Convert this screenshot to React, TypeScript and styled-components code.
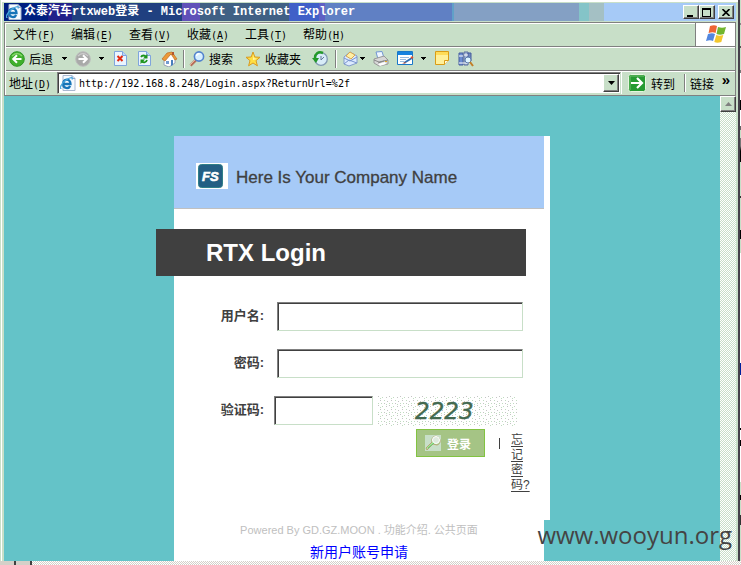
import React from "react";
import styled, { createGlobalStyle } from "styled-components";

const face = "#c8dfc8";
const teal = "#64c3c8";
const ui = '"Liberation Sans", "Noto Sans CJK SC", sans-serif';
const mono = '"Liberation Mono", "Noto Sans CJK SC", monospace';
const tallMono = '"DejaVu Sans Mono", "Noto Sans CJK SC", monospace';

const GlobalStyle = createGlobalStyle`
  * { box-sizing: border-box; }
  body { margin: 0; background: ${face}; font-family: ${ui}; font-size: 12px; color: #000; }
  button, input { font: inherit; color: inherit; margin: 0; padding: 0; border: 0; border-radius: 0; }
  button { background: none; cursor: pointer; }
  svg { display: block; flex: none; }
`;

const Desktop = styled.div`
  display: grid;
  grid-template-columns: 1fr 1px;
  grid-template-rows: 1fr 4px;
  min-height: 100vh;
`;
const Behind = styled.div`
  background: linear-gradient(#c8dfc8 0 23px, #888 23px 25px, #c8dfc8 25px 46px, #555 46px 48px, #c8dfc8 48px 70px,
    #777 70px 73px, #fff 73px 100px, #000 100px 110px, #fff 110px 126px, #666 126px 130px, #c8dfc8 130px 138px,
    #777 138px 146px, #000 151px 162px, #c8dfc8 162px 196px, #333 196px 198px, #c8dfc8 198px 230px, #000 230px 239px,
    #c8dfc8 239px 253px, #fff 253px 363px, #00209c 363px 375px, #fff 375px 428px, #000 428px 430px, #fff 430px 440px,
    #000 440px 446px, #fff 446px 482px, #c8dfc8 482px 495px, #000 495px 500px, #c8dfc8 500px 515px, #333 515px 525px, #c8dfc8 525px);
`;
const Window = styled.div`
  display: flex;
  flex-direction: column;
  min-width: 0;
  background: ${face};
  border-right: 2px solid #45404a;
  padding: 3px 2px 0 4px;
  box-shadow: inset 1px 0 ${face}, inset 2px 2px #fff;
`;
const TitleBar = styled.header`
  display: flex;
  align-items: center;
  height: 18px;
  gap: 2px;
  padding: 0 2px;
  color: #fff;
  background: linear-gradient(90deg, #002080 0 44px, #20208a 44px 68px, #204080 68px 178px, #6050b8 178px 196px,
    #406084 196px 285px, #4060c8 285px 315px, #6060c4 315px 321px, #6080c4 321px 448px, #60a0c8 448px 450px,
    #84a0c4 450px 575px, #84c4c8 575px 585px, #a4c0c4 585px 600px, #a6caf7 600px);
`;
const Title = styled.h1`
  flex: 1;
  margin: 0;
  font: bold 12px/18px ${mono};
  white-space: nowrap;
`;
const WindowButtons = styled.div`
  display: flex;
`;
const BevelButton = styled.button<{ $gap?: boolean }>`
  display: grid;
  place-items: center;
  flex: none;
  width: 16px;
  height: 14px;
  margin-left: ${(p) => (p.$gap ? "3px" : "0")};
  background: ${face};
  border: 1px solid;
  border-color: #fff #404040 #404040 #fff;
  box-shadow: inset -1px -1px #808080;
`;
const Bars = styled.div`
  margin-top: 1px;
  border: 1px solid #808080;
  box-shadow: inset 1px 1px #fff;
  padding-left: 1px;
`;
const Bar = styled.div`
  display: flex;
  align-items: center;
  height: 24px;
  border-bottom: 1px solid #808080;
  box-shadow: inset 0 1px #fff;
  &:last-child { border-bottom: 0; }
`;
const MenuItem = styled.button`
  width: 58px;
  padding-left: 7px;
  text-align: left;
  white-space: nowrap;
  line-height: 18px;
`;
const Key = styled.span`
  font: 10px ${tallMono};
  u { text-underline-offset: 2px; }
`;
const Flag = styled.div`
  display: grid;
  place-items: center;
  width: 40px;
  height: 23px;
  margin-left: auto;
  background: #fff;
  border-left: 1px solid #808080;
`;
const Tools = styled(Bar)`
  padding-left: 3px;
`;
const Tool = styled.button<{ $w: number }>`
  display: flex;
  align-items: center;
  gap: 4px;
  flex: none;
  width: ${(p) => p.$w}px;
  height: 20px;
  white-space: nowrap;
`;
const Split = styled.div<{ $space?: number }>`
  flex: none;
  width: 2px;
  height: 18px;
  margin-right: ${(p) => p.$space ?? 0}px;
  background: linear-gradient(90deg, #808080 50%, #fff 50%);
`;
const AddressBar = styled(Bar)`
  padding-left: 3px;
`;
const AddressLabel = styled.label`
  width: 48px;
  padding-bottom: 2px;
  white-space: nowrap;
`;
const Combo = styled.div`
  display: flex;
  align-items: center;
  flex: 1;
  min-width: 0;
  height: 22px;
  padding: 1px 1px 1px 2px;
  background: #fff;
  border: 1px solid;
  border-color: #808080 ${face} ${face} #808080;
  box-shadow: inset 1px 1px #404040;
`;
const AddressInput = styled.input`
  flex: 1;
  min-width: 0;
  padding-left: 3px;
  font: 10px ${tallMono};
  outline: none;
`;
const DropButton = styled(BevelButton)`
  height: 18px;
`;
const Go = styled.button`
  display: flex;
  align-items: center;
  gap: 5px;
  width: 63px;
  padding-left: 6px;
  height: 22px;
  border-left: 1px solid #fff;
`;
const Links = styled.button`
  display: flex;
  justify-content: space-between;
  align-items: center;
  width: 49px;
  padding: 0 5px 0 4px;
`;
const More = styled.span`
  padding-bottom: 6px;
  font: bold 15px/12px ${ui};
`;
const dither = (c: string) => `repeating-conic-gradient(${c} 0 25%, #fff 0 50%) 0 0 / 2px 2px`;
const Viewport = styled.div`
  display: grid;
  grid-template-columns: 1fr 16px;
  flex: 1;
`;
const Page = styled.main`
  display: flex;
  flex-direction: column;
  align-items: center;
  padding-top: 40px;
  background: ${teal};
`;
const Track = styled.div`
  background: ${dither(face)};
`;
const ScrollButton = styled(BevelButton)`
  height: 16px;
`;
const Column = styled.div`
  display: flex;
  flex-direction: column;
  flex: 1;
  width: 376px;
  max-width: 100%;
`;
const Card = styled.section`
  min-height: 384px;
  background: #fff;
  padding-right: 6px;
`;
const Company = styled.header`
  display: flex;
  align-items: center;
  gap: 8px;
  height: 73px;
  padding: 8px 22px 0;
  background: #a6caf7;
  border-bottom: 1px solid #c0c0c0;
`;
const CompanyName = styled.div`
  padding-top: 4px;
  font-size: 17px;
  color: #404040;
  -webkit-text-stroke: 0.3px #404040;
`;
const Banner = styled.h2`
  margin: 20px 18px 26px -18px;
  padding-left: 50px;
  font: bold 24px/47px ${ui};
  color: #fff;
  background: #404040;
`;
const Form = styled.form`
  color: #404040;
`;
const Field = styled.div<{ $tight?: boolean }>`
  display: flex;
  align-items: center;
  gap: ${(p) => (p.$tight ? "10px" : "13px")};
  height: 29px;
  margin-bottom: ${(p) => (p.$tight ? "4px" : "18px")};
`;
const Label = styled.label`
  width: 90px;
  padding-bottom: 4px;
  text-align: right;
  font-size: 13px;
  font-weight: bold;
  white-space: nowrap;
`;
const TextBox = styled.input<{ $short?: boolean }>`
  width: ${(p) => (p.$short ? "99px" : "246px")};
  height: 29px;
  padding: 0 4px;
  background: #fff;
  border: 1px solid;
  border-color: #808080 ${face} ${face} #808080;
  box-shadow: inset 1px 1px #404040;
`;
const Captcha = styled.svg`
  margin-left: -6px;
`;
const Actions = styled.div`
  display: flex;
  align-items: flex-start;
  padding-left: 242px;
`;
const LoginButton = styled.button`
  display: flex;
  align-items: center;
  gap: 6px;
  width: 69px;
  height: 28px;
  padding-left: 8px;
  color: #fff;
  font-weight: bold;
  background: #a5c485;
  border: 1px solid #82c341;
`;
const Divider = styled.span`
  width: 1px;
  height: 11px;
  margin: 9px 11px 0 14px;
  background: #404040;
`;
const Forgot = styled.a`
  width: 20px;
  padding-top: 4px;
  font-size: 12px;
  line-height: 15px;
  color: #404040;
  text-underline-offset: 2px;
  word-break: break-all;
`;
const Footer = styled.footer`
  flex: 1;
  margin-right: 6px;
  background: #fff;
  text-align: center;
`;
const Powered = styled.p`
  margin: 0 0 6px;
  padding-top: 2px;
  font-size: 11px;
  line-height: 16px;
  color: #c0c0c0;
`;
const Register = styled.a`
  display: block;
  font-size: 14px;
  line-height: 17px;
  color: #00f;
  text-decoration: none;
`;
const Edge = styled.div`
  grid-column: 1 / -1;
  background: linear-gradient(90deg, #d4d0c8 0 14px, #404040 14px 16px, #d4d0c8 16px 30px, #404040 30px 32px, transparent 32px),
    ${dither("#d4d0c8")};
`;
const Watermark = styled.div`
  position: absolute;
  right: 9px;
  top: 518px;
  font: 24px/34px "Open Sans", sans-serif;
  color: #444;
`;

const IEIcon = () => (
  <svg width="16" height="16" viewBox="0 0 16 16">
    <path d="M3 .5h9l3 3v12H3z" fill="#f5faff" stroke="#a8b8d0" />
    <path d="M12 .5v3h3" fill="#cbdcf0" stroke="#90a8c8" />
    <path d="M3.2 9h7.3c0-6-7.3-5.6-7.3.2 0 4.6 5.5 4.9 7 1.7" fill="none" stroke="#1674b8" strokeWidth="2.3" />
    <path d="M1.3 13C-1 15 1 8 6 5s7-3 6-.5" fill="none" stroke="#49a7dd" strokeWidth="1.3" />
  </svg>
);
const Arrow = () => (
  <svg width="5" height="3" viewBox="0 0 5 3" shapeRendering="crispEdges"><path d="M0 0h5v1H4v1H3v1H2V2H1V1H0z" /></svg>
);
const Round = ({ gray }: { gray?: boolean }) => (
  <svg width="16" height="16" viewBox="0 0 16 16">
    <circle cx="8" cy="8" r="7.3" fill={gray ? "#a9aaa9" : "#3fb02c"} stroke={gray ? "#bcbcbc" : "#2c9622"} />
    <path d="M3 5q5-5 10 0" stroke={gray ? "#cacaca" : "#86d66b"} strokeWidth="1.5" fill="none" />
    <path d={gray ? "M3.5 8h8M8 4.3 11.8 8 8 11.7" : "M12.5 8h-8M8 4.3 4.2 8 8 11.7"} fill="none" stroke="#fff" strokeWidth="2" />
  </svg>
);
const Sheet = () => <><path d="M1.5.5h8l4 4v10h-12z" fill="#eaf4ff" stroke="#7fa5dc" /><path d="M9.5.5v4h4" fill="#bbd5fa" stroke="#7fa5dc" /></>;
const StopIcon = () => (
  <svg width="15" height="15" viewBox="0 0 15 15"><Sheet /><path d="m4.5 5 5 5m0-5-5 5" stroke="#e32910" strokeWidth="2" /></svg>
);
const RefreshIcon = () => (
  <svg width="15" height="15" viewBox="0 0 15 15"><Sheet /><path d="M4 6c1-2 4-2 5 0M10 9c-1 3-4 3-5 1" stroke="#1c941c" strokeWidth="1.8" fill="none" /><path d="M10.5 3v4.5H6zM3.5 13V8.5H8z" fill="#1c941c" /></svg>
);
const HomeIcon = () => (
  <svg width="17" height="16" viewBox="0 0 17 16">
    <path d="M3 8v6l5 2 6-4V7l-4-4z" fill="#fff" stroke="#98a2b5" />
    <path d="m1 8 5-6 5-1 5 7-2 1-4-6-6 7z" fill="#ed9a38" stroke="#bc6c26" strokeWidth=".7" />
    <path d="M10 9h2v5l-2 1z" fill="#477ebd" /><path d="M11 1h2v3h-2z" fill="#b45730" /><path d="M5 10h3v3H5z" fill="#739bd0" />
  </svg>
);
const SearchIcon = () => (
  <svg width="16" height="16" viewBox="0 0 16 16">
    <path d="m1.5 14.5 6-6" stroke="#b56f59" strokeWidth="2.6" /><path d="m1 14 6-6" stroke="#e8b29c" />
    <circle cx="10" cy="5.5" r="4.6" fill="#d6efff" stroke="#5383ce" strokeWidth="1.6" /><path d="M7.5 5c.3-2 2-2.5 3-2" stroke="#fff" strokeWidth="1.5" fill="none" />
  </svg>
);
const StarIcon = () => (
  <svg width="16" height="16" viewBox="0 0 16 16">
    <path d="m8 1 1.8 5 5.2.3-4 3.3 1.4 5.2L8 12l-4.4 2.8L5 9.6 1 6.3 6.2 6z" fill="#ffdf43" stroke="#d99a20" /><path d="m8 3 .7 4L12 8l-4 1z" fill="#fff6a8" />
  </svg>
);
const HistoryIcon = () => (
  <svg width="16" height="16" viewBox="0 0 16 16">
    <circle cx="9" cy="8" r="6.3" fill="#d8ecf8" stroke="#8299b4" strokeWidth="1.3" /><path d="M9 9V5m0 4 3-3" stroke="#617798" fill="none" />
    <path d="M11 2C6 0 3 3 3 7" stroke="#23992a" strokeWidth="2.5" fill="none" /><path d="M0 7h7l-3 5z" fill="#23992a" />
  </svg>
);
const MailIcon = () => (
  <svg width="15" height="16" viewBox="0 0 15 16">
    <path d="m1 6 6-5 7 4v7l-8 3-5-2z" fill="#dceaff" stroke="#839bcb" /><path d="m3 5 4-4 5 3-4 4z" fill="#fff0a3" stroke="#d8a751" /><path d="m1 7 6 3 7-4M1 13l5-4 8 3" fill="none" stroke="#7894cd" />
  </svg>
);
const PrintIcon = () => (
  <svg width="16" height="16" viewBox="0 0 16 16">
    <path d="m3 1 6-.5L11 7 5 8z" fill="#eef6ff" stroke="#7195d3" /><path d="m1 8 10-3 4 4v4l-9 2-5-3z" fill="#d7d7d7" stroke="#999" /><path d="m1 9 5 2 9-2M5 12l6-2" stroke="#888" fill="none" /><path d="m5 13 7-2 1 2-6 2z" fill="#fff" /><path d="M12 10h2v1h-2z" fill="#e0a824" />
  </svg>
);
const EditIcon = () => (
  <svg width="17" height="15" viewBox="0 0 17 15">
    <path d="M.5.5h15v13H.5z" fill="#fff" stroke="#1978c8" /><path d="M1 1h14v3H1z" fill="#1682df" /><path d="M3 6.5h9m-9 2h6m-6 2h4" stroke="#9abce0" /><path d="m7 12 8-5" stroke="#326fb4" strokeWidth="2" /><path d="m5 13 3-2 1 1z" fill="#d14b28" /><path d="m14 7 2-1" stroke="#dc5130" strokeWidth="2" />
  </svg>
);
const NoteIcon = () => (
  <svg width="15" height="15" viewBox="0 0 15 15"><path d="M.5.5h13v9l-4 4h-9z" fill="#fff09a" stroke="#d99c16" /><path d="M1 1h12v3H1z" fill="#ffdc58" /><path d="M9.5 13.5v-4h4" fill="#fffbe0" stroke="#d99c16" /></svg>
);
const BookIcon = () => (
  <svg width="16" height="16" viewBox="0 0 16 16">
    <path d="M1 2h4v12H1z" fill="#6c8dd1" stroke="#465d9e" /><path d="M6 1h4v13H6z" fill="#a6b8d9" stroke="#596d9d" /><path d="M10 2h3v8h-3z" fill="#7189bd" stroke="#465d9e" /><path d="M1 5h4m1-1h4M1 12h9" stroke="#fff" /><circle cx="10" cy="9" r="3" fill="#dff5ff" stroke="#5b7cac" /><path d="m12 11 3 4" stroke="#c27e28" strokeWidth="2" />
  </svg>
);
const FlagIcon = () => (
  <svg width="20" height="19" viewBox="0 0 20 19">
    <path d="M4 1c3-1 5-1 7 0L9.6 8c-2-1-4-1-7 0z" fill="#ee6534" /><path d="M12 2c3 1 5 1 8 0l-2 7c-3 1-5 1-7.5 0z" fill="#71b52e" />
    <path d="M2 9c3-1 5-1 7 0l-2 7c-2-1-4-1-7 0z" fill="#5387df" /><path d="M10.3 10c2 1 4 1 7 0l-2 7c-3 1-5 1-7 0z" fill="#f3c72d" />
  </svg>
);
const GoIcon = () => (
  <svg width="18" height="18" viewBox="0 0 18 18"><rect x=".5" y=".5" width="17" height="17" rx="2" fill="#259a32" stroke="#e5f5df" /><path d="M2 16V2h14" stroke="#70bd6d" fill="none" /><path d="M3 9h11M9 4l5 5-5 5" fill="none" stroke="#fff" strokeWidth="2.2" /></svg>
);
const Logo = () => (
  <svg width="32" height="26" viewBox="0 0 32 26" role="img" aria-label="FS">
    <path d="M0 0h32v26H0z" fill="#fff" /><rect x="2.5" y="1.5" width="24" height="23" rx="3" fill="#235f84" stroke="#2f8089" />
    <text x="6" y="18" fontFamily="Liberation Sans, sans-serif" fontWeight="bold" fontStyle="italic" fontSize="13" fill="#fff" stroke="#fff" strokeWidth=".6">FS</text>
  </svg>
);
const KeyIcon = () => (
  <svg width="16" height="16" viewBox="0 0 16 16"><path d="M0 0h16v16H0z" fill="#c8dfc8" /><path d="M1 13 7 7C6 2 10 0 13 2s3 7-1 8l-4-1-6 6z" fill="#a5e69a" stroke="#b6a576" /><circle cx="11" cy="5" r="3.5" fill="#deeadd" stroke="#fff" /><path d="m3 13 6-5" stroke="#68c86c" /></svg>
);

const menus = [["文件", "F"], ["编辑", "E"], ["查看", "V"], ["收藏", "A"], ["工具", "T"], ["帮助", "H"]];

export default function App() {
  return (
    <Desktop>
      <GlobalStyle />
      <Window>
        <TitleBar>
          <IEIcon />
          <Title>众泰汽车rtxweb登录 - Microsoft Internet Explorer</Title>
          <WindowButtons>
            <BevelButton aria-label="Minimize"><svg width="10" height="9"><path d="M1 7h6v2H1z" /></svg></BevelButton>
            <BevelButton aria-label="Maximize"><svg width="10" height="9" shapeRendering="crispEdges"><path d="M0 0h9v9H0zM1 2v6h7V2z" fillRule="evenodd" /></svg></BevelButton>
            <BevelButton $gap aria-label="Close"><svg width="8" height="7"><path d="m.5 0 7 7m0-7-7 7" stroke="#000" strokeWidth="1.6" /></svg></BevelButton>
          </WindowButtons>
        </TitleBar>
        <Bars>
          <Bar as="nav">
            {menus.map(([name, key]) => (
              <MenuItem key={key}>{name}<Key>(<u>{key}</u>)</Key></MenuItem>
            ))}
            <Flag><FlagIcon /></Flag>
          </Bar>
          <Tools role="toolbar">
            <Tool $w={53}><Round />后退</Tool>
            <Tool $w={13} aria-label="Back list"><Arrow /></Tool>
            <Tool $w={24} aria-label="Forward"><Round gray /></Tool>
            <Tool $w={14} aria-label="Forward list"><Arrow /></Tool>
            <Tool $w={24} aria-label="Stop"><StopIcon /></Tool>
            <Tool $w={24} aria-label="Refresh"><RefreshIcon /></Tool>
            <Tool $w={22} aria-label="Home"><HomeIcon /></Tool>
            <Split $space={4} />
            <Tool $w={56}><SearchIcon />搜索</Tool>
            <Tool $w={67}><StarIcon />收藏夹</Tool>
            <Tool $w={23} aria-label="History"><HistoryIcon /></Tool>
            <Split $space={6} />
            <Tool $w={17} aria-label="Mail"><MailIcon /></Tool>
            <Tool $w={13} aria-label="Mail list"><Arrow /></Tool>
            <Tool $w={24} aria-label="Print"><PrintIcon /></Tool>
            <Tool $w={24} aria-label="Edit"><EditIcon /></Tool>
            <Tool $w={14} aria-label="Edit list"><Arrow /></Tool>
            <Tool $w={23} aria-label="Discuss"><NoteIcon /></Tool>
            <Tool $w={16} aria-label="Research"><BookIcon /></Tool>
          </Tools>
          <AddressBar>
            <AddressLabel htmlFor="address">地址<Key>(<u>D</u>)</Key></AddressLabel>
            <Combo>
              <IEIcon />
              <AddressInput id="address" defaultValue="http://192.168.8.248/Login.aspx?ReturnUrl=%2f" />
              <DropButton aria-label="Show addresses"><svg width="7" height="4"><path d="M0 0h7L3.5 4z" /></svg></DropButton>
            </Combo>
            <Go><GoIcon />转到</Go>
            <Split />
            <Links>链接<More>»</More></Links>
          </AddressBar>
        </Bars>
        <Viewport>
          <Page>
            <Column>
              <Card>
                <Company><Logo /><CompanyName>Here Is Your Company Name</CompanyName></Company>
                <Banner>RTX Login</Banner>
                <Form onSubmit={(e) => e.preventDefault()}>
                  <Field><Label htmlFor="user">用户名:</Label><TextBox id="user" /></Field>
                  <Field><Label htmlFor="pass">密码:</Label><TextBox id="pass" type="password" /></Field>
                  <Field $tight>
                    <Label htmlFor="code">验证码:</Label><TextBox id="code" $short />
                    <Captcha width="140" height="30" viewBox="0 0 140 30">
                      <defs>
                        <pattern id="specks" width="11" height="9" patternUnits="userSpaceOnUse" shapeRendering="crispEdges">
                          <path d="M1 0h1v1H1zM9 1h1v1H9zM3 4h1v1H3zM7 7h1v1H7zM10 5h1v1h-1z" fill="#c4c4c4" />
                          <path d="M5 1h1v1H5zM7 4h1v1H7zM1 7h1v1H1zM4 7h1v1H4zM3 2h1v1H3zM9 8h1v1H9z" fill="#bfdcbf" />
                        </pattern>
                      </defs>
                      <path d="M0 0h140v30H0z" fill="url(#specks)" />
                      <text x="38" y="23" fontFamily="DejaVu Sans, sans-serif" fontSize="23" fontStyle="italic" fill="#43694f" stroke="#43694f" strokeWidth=".4">2223</text>
                    </Captcha>
                  </Field>
                  <Actions>
                    <LoginButton type="submit"><KeyIcon />登录</LoginButton>
                    <Divider />
                    <Forgot href="#forgot">忘记密码?</Forgot>
                  </Actions>
                </Form>
              </Card>
              <Footer>
                <Powered>Powered By GD.GZ.MOON . 功能介绍. 公共页面</Powered>
                <Register href="#register">新用户账号申请</Register>
              </Footer>
            </Column>
          </Page>
          <Track><ScrollButton aria-label="Scroll up"><svg width="7" height="4"><path d="M0 4h7L3.5 0z" fill="#808080" /></svg></ScrollButton></Track>
        </Viewport>
      </Window>
      <Behind />
      <Edge />
      <Watermark>www.wooyun.org</Watermark>
    </Desktop>
  );
}
